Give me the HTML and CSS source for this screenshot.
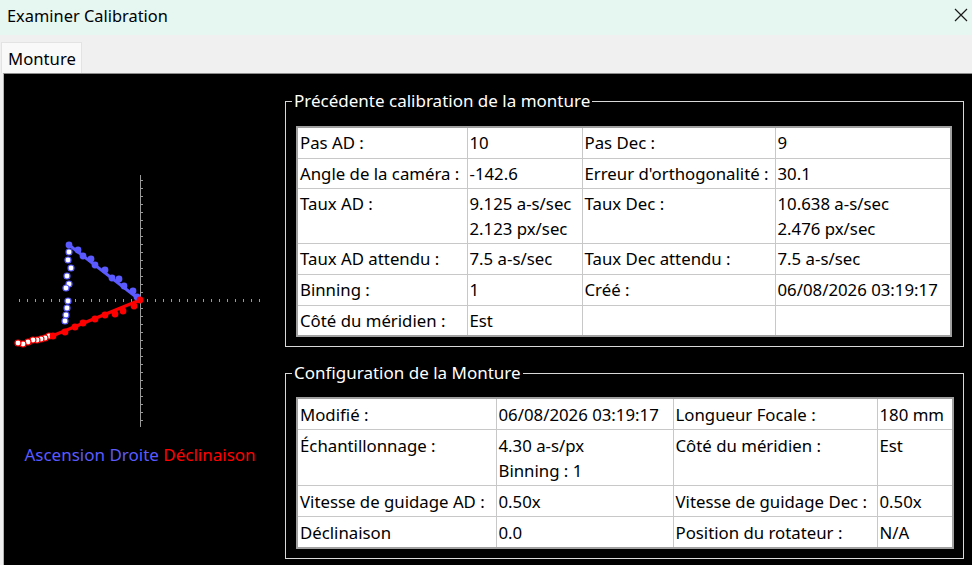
FILE: index.html
```html
<!DOCTYPE html>
<html lang="fr">
<head>
    <meta charset="UTF-8">
    <title>Examiner Calibration</title>
    <link rel="stylesheet" href="styles.css">
</head>
<body>
    <div class="titlebar">
        <span class="title">Examiner Calibration</span>
        <svg class="close" width="14" height="14" viewBox="0 0 14 14">
            <path d="M1 1 L13 13 M13 1 L1 13" stroke="#1a1a1a" stroke-width="1.2" fill="none"/>
        </svg>
    </div>

    <div class="tabs">
        <div class="tab">Monture</div>
    </div>

    <div class="panel">
        <div class="plot-col">
            <!-- viewBox uses window coordinates so the points read as measured -->
            <svg class="plot" width="272" height="355" viewBox="4 75 272 355">
                <g stroke="#9a9a9a" stroke-width="1">
                    <line x1="140.5" y1="176" x2="140.5" y2="428"/>
                </g>
                <g id="ticks" stroke="#9a9a9a" stroke-width="1"></g>

                <line x1="69" y1="246" x2="140" y2="301" stroke="#5a5aff" stroke-width="3"/>
                <line x1="140" y1="301" x2="52" y2="337" stroke="#ff0000" stroke-width="3"/>

                <g id="dots"></g>
            </svg>
            <div class="legend">
                <span class="ra">Ascension Droite</span>
                <span class="dec">Déclinaison</span>
            </div>
        </div>

        <div class="info-col">
            <fieldset class="group">
                <legend>Précédente calibration de la monture</legend>
                <table class="grid grid-prev">
                    <colgroup>
                        <col style="width:170px"><col style="width:115px"><col style="width:193px"><col>
                    </colgroup>
                    <tr>
                        <td>Pas AD :</td><td>10</td><td>Pas Dec :</td><td>9</td>
                    </tr>
                    <tr>
                        <td>Angle de la caméra :</td><td>-142.6</td><td>Erreur d'orthogonalité :</td><td>30.1</td>
                    </tr>
                    <tr>
                        <td>Taux AD :</td><td>9.125 a-s/sec<br>2.123 px/sec</td><td>Taux Dec :</td><td>10.638 a-s/sec<br>2.476 px/sec</td>
                    </tr>
                    <tr>
                        <td>Taux AD attendu :</td><td>7.5 a-s/sec</td><td>Taux Dec attendu :</td><td>7.5 a-s/sec</td>
                    </tr>
                    <tr>
                        <td>Binning :</td><td>1</td><td>Créé :</td><td>06/08/2026 03:19:17</td>
                    </tr>
                    <tr>
                        <td>Côté du méridien :</td><td>Est</td><td></td><td></td>
                    </tr>
                </table>
            </fieldset>

            <fieldset class="group group-config">
                <legend>Configuration de la Monture</legend>
                <table class="grid grid-config">
                    <colgroup>
                        <col style="width:199px"><col style="width:177px"><col style="width:204px"><col>
                    </colgroup>
                    <tr>
                        <td>Modifié :</td><td>06/08/2026 03:19:17</td><td>Longueur Focale :</td><td>180 mm</td>
                    </tr>
                    <tr>
                        <td>Échantillonnage :</td><td>4.30 a-s/px<br>Binning : 1</td><td>Côté du méridien :</td><td>Est</td>
                    </tr>
                    <tr>
                        <td>Vitesse de guidage AD :</td><td>0.50x</td><td>Vitesse de guidage Dec :</td><td>0.50x</td>
                    </tr>
                    <tr>
                        <td>Déclinaison</td><td>0.0</td><td>Position du rotateur :</td><td>N/A</td>
                    </tr>
                </table>
            </fieldset>
        </div>
    </div>

    <script>
        const NS = 'http://www.w3.org/2000/svg';

        // axis tick marks, 8px apart
        const ticks = document.getElementById('ticks');
        for (let x = 19; x <= 260; x += 8) {
            const t = document.createElementNS(NS, 'line');
            t.setAttribute('x1', x + 0.5); t.setAttribute('x2', x + 0.5);
            t.setAttribute('y1', 300); t.setAttribute('y2', 303);
            ticks.appendChild(t);
        }
        for (let y = 181; y <= 428; y += 8) {
            const t = document.createElementNS(NS, 'line');
            t.setAttribute('x1', 141); t.setAttribute('x2', 143);
            t.setAttribute('y1', y + 0.5); t.setAttribute('y2', y + 0.5);
            ticks.appendChild(t);
        }

        // calibration steps: [x, y, type]  b = RA step, w = RA return, r = Dec step, x = Dec return
        const points = [
            [69, 253, 'w'], [68, 261, 'w'], [71, 269, 'w'], [67, 277, 'w'], [69, 285, 'w'],
            [66, 289, 'w'], [68, 302, 'w'], [67, 309, 'w'], [66, 316, 'w'], [65, 322, 'w'],
            [69, 246, 'b'], [78, 251, 'b'], [83, 257, 'b'], [91, 260, 'b'], [95, 266, 'b'],
            [105, 271, 'b'], [112, 279, 'b'], [119, 280, 'b'], [124, 287, 'b'], [133, 292, 'b'], [137, 298, 'b'],
            [49, 337, 'x'], [45, 339, 'x'], [41, 340, 'x'], [37, 341, 'x'], [33, 341, 'x'],
            [28, 343, 'x'], [23, 345, 'x'], [18, 344, 'x'],
            [134, 307, 'r'], [123, 312, 'r'], [115, 315, 'r'], [105, 316, 'r'], [95, 320, 'r'],
            [83, 324, 'r'], [75, 328, 'r'], [65, 333, 'r'], [53, 337, 'r'], [140, 301, 'r']
        ];
        const dots = document.getElementById('dots');
        points.forEach(([x, y, type]) => {
            const c = document.createElementNS(NS, 'circle');
            c.setAttribute('cx', x);
            c.setAttribute('cy', y);
            if (type === 'b' || type === 'r') {
                c.setAttribute('r', 3.4);
                c.setAttribute('fill', type === 'b' ? '#5a5aff' : '#ff0000');
            } else {
                c.setAttribute('r', 3);
                c.setAttribute('fill', '#ffffff');
                c.setAttribute('stroke', type === 'w' ? '#5a5aff' : '#ff0000');
                c.setAttribute('stroke-width', 1.2);
            }
            dots.appendChild(c);
        });
    </script>
</body>
</html>
```

FILE: styles.css
```css
html, body {
    margin: 0;
    padding: 0;
}

body {
    font-family: 'Noto Sans', 'Open Sans', sans-serif;
    font-size: 17px;
    background-color: #f0f0f0;
    color: #000;
    height: 565px;
    overflow: hidden;
}

.titlebar {
    height: 35px;
    background-color: #e6f6f1;
    display: flex;
    align-items: center;
    justify-content: space-between;
    padding: 0 4px 0 7px;
}

.title {
    font-size: 16.4px;
    margin-top: -4px;
}

.close {
    margin-top: -6px;
}

.tabs {
    height: 38px;
    display: flex;
    align-items: flex-end;
    padding-left: 1px;
}

.tab {
    height: 31px;
    width: 81px;
    box-sizing: border-box;
    background-color: #f9f9f9;
    border: 1px solid #e3e3e3;
    border-bottom: none;
    padding-left: 6px;
    line-height: 31px;
    font-size: 16.7px;
}

.panel {
    margin-left: 3px;
    height: 492px;
    background-color: #000;
    border-top: 1px solid #8c8c8c;
    border-left: 1px solid #b4b4b4;
    display: flex;
}

.plot-col {
    width: 272px;
    display: flex;
    flex-direction: column;
}

.plot {
    display: block;
}

.legend {
    text-align: center;
    margin-top: 14px;
    font-size: 17px;
}

.ra {
    color: #5a5aff;
}

.dec {
    color: #ff0000;
}

.info-col {
    margin-left: 9px;
    padding-top: 17px;
}

.group {
    width: 679px;
    box-sizing: border-box;
    margin: 0 0 16px 0;
    padding: 15px 0 9px 6px;
    border: 1px solid #d8d8d8;
    color: #fff;
}

.group-config {
    padding-top: 14px;
}

.group legend {
    padding: 0 2px;
    line-height: 20px;
    font-size: 17px;
}

.grid {
    margin-left: 4px;
    border-collapse: collapse;
    table-layout: fixed;
    background-color: #fff;
    color: #000;
    border: 2px solid #a0a0a0;
    font-size: 16.8px;
}

.grid-prev {
    width: 656px;
}

.grid-config {
    width: 658px;
}

.grid td {
    border: 1px solid #c8c8c8;
    padding: 3px 2px 2px 2px;
    line-height: 24.6px;
    vertical-align: top;
    white-space: nowrap;
    overflow: hidden;
}

.grid-config td {
    line-height: 25px;
}
```
